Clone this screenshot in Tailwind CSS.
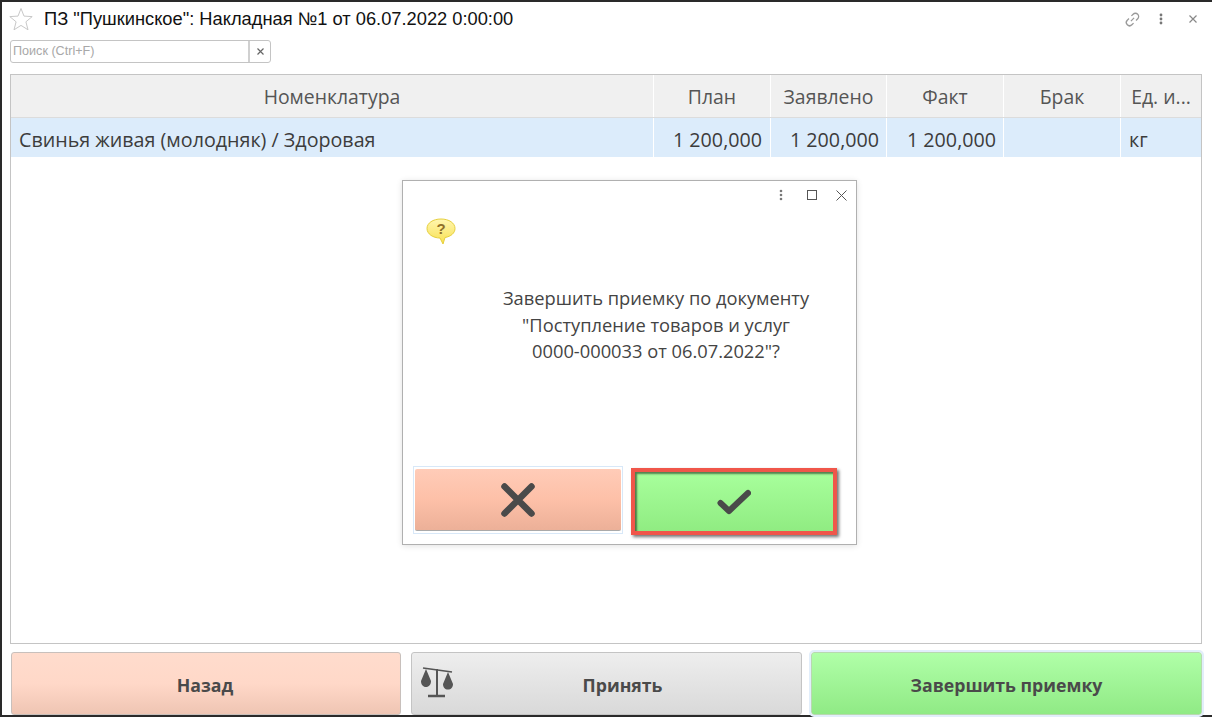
<!DOCTYPE html>
<html lang="ru"><head><meta charset="utf-8"><script src="https://cdn.jsdelivr.net/npm/@tailwindcss/browser@4"></script></head>
<body class="m-0 bg-white overflow-hidden">
<div class="relative w-[1212px] h-[719px] bg-white font-['Liberation_Sans',sans-serif] overflow-hidden">
 <div class="w-[1212px] h-[717px] border-t-2 border-l-2 border-b-2 border-[#2a2a2a] pl-[8px] pr-[10px] flex flex-col">
  <div class="h-[36px] pb-[2px] flex items-center shrink-0">
   <svg class="w-[24px] h-[24px] -ml-[1px]" viewBox="0 0 24 24"><path d="M12 1.500l3 7.600 8.200.5-6.300 5.200 2.100 8-7-4.400-7 4.400 2.100-8L.8 9.600 9 9.100z" fill="#fff" stroke="#c8c8c8" stroke-width="1"/></svg>
   <span class="ml-[11px] text-[18.3px] text-[#111] leading-none whitespace-nowrap">ПЗ "Пушкинское": Накладная №1 от 06.07.2022 0:00:00</span>
   <div class="ml-auto flex items-center mr-[5px] gap-[18px]">
    <svg class="w-[17px] h-[17px]" viewBox="0 0 16 16" fill="none" stroke="#999" stroke-width="1.200"><path d="M6.500 9.500l3-3M7 4.600l1.600-1.600a3 3 0 0 1 4.300 4.300l-1.600 1.600M9 11.400l-1.600 1.600a3 3 0 0 1-4.300-4.300l1.600-1.600"/></svg>
    <svg class="w-[4px] h-[12px]" viewBox="0 0 4 12" fill="#777"><circle cx="2" cy="2" r="1.400"/><circle cx="2" cy="6" r="1.400"/><circle cx="2" cy="10" r="1.400"/></svg>
    <svg class="w-[8px] h-[8px] ml-[8px]" viewBox="0 0 8 8" stroke="#888" stroke-width="1.200"><path d="M.5.5l7 7M7.500.5l-7 7"/></svg>
   </div>
  </div>
  <div class="mt-[2px] w-[261px] h-[23px] shrink-0 border border-[#c4c4c4] rounded-[3px] flex items-stretch">
   <div class="flex-1 border-r-2 border-[#d0d0d0] pl-[2px] text-[12.6px] leading-[20px] text-[#a8a8a8]">Поиск (Ctrl+F)</div>
   <div class="w-[20px] flex items-center justify-center"><svg class="w-[7px] h-[7px]" viewBox="0 0 7 7" stroke="#666" stroke-width="1.200"><path d="M.5.5l6 6M6.500.5l-6 6"/></svg></div>
  </div>
  <div class="mt-[11px] w-[1192px] h-[570px] shrink-0 border border-[#c4c4c4] font-['Open_Sans',sans-serif] text-[#555]">
   <div class="flex h-[43px] bg-[#f0f0f0] border-b border-[#dcdcdc] text-[19.4px] items-center text-center">
    <div class="w-[643px] h-full border-r border-white leading-[43px]">Номенклатура</div>
    <div class="w-[117px] h-full border-r border-white leading-[43px]">План</div>
    <div class="w-[116px] h-full border-r border-white leading-[43px]">Заявлено</div>
    <div class="w-[117px] h-full border-r border-white leading-[43px]">Факт</div>
    <div class="w-[117px] h-full border-r border-white leading-[43px]">Брак</div>
    <div class="flex-1 h-full leading-[43px]">Ед. и...</div>
   </div>
   <div class="flex h-[39px] bg-[#dcecfb] text-[19.7px] text-[#3c3c3c] leading-[43px]">
    <div class="w-[643px] border-r border-white pl-[8px]">Свинья живая (молодняк) / Здоровая</div>
    <div class="w-[117px] border-r border-white text-right pr-[8px]">1 200,000</div>
    <div class="w-[116px] border-r border-white text-right pr-[7px]">1 200,000</div>
    <div class="w-[117px] border-r border-white text-right pr-[7px]">1 200,000</div>
    <div class="w-[117px] border-r border-white"></div>
    <div class="flex-1 pl-[8px]">кг</div>
   </div>
  </div>
  <div class="mt-[8px] h-[63px] flex gap-[9px] font-['Open_Sans',sans-serif] font-bold text-[#4a4a4a] text-[17.7px] pl-[1px] shrink-0 w-[1192px]">
   <div class="w-[390px] h-[63px] pt-[3px] pr-[2px] rounded-[3px] border border-[#c8c0bc] bg-gradient-to-b from-[#ffdccd] via-[#ffd8c8] to-[#efc5b3] flex items-center justify-center">Назад</div>
   <div class="relative ml-[1px] w-[391px] h-[63px] pt-[3px] pl-[32px] rounded-[3px] border border-[#c4c4c4] bg-gradient-to-b from-[#eeeeee] to-[#d9d9d9] flex items-center justify-center">Принять
    <svg class="absolute left-[8px] top-[13px] w-[34px] h-[32px]" viewBox="0 0 34 32" fill="#555"><path d="M3 2l29 4" stroke="#555" stroke-width="1.500"/><path d="M17 3v26" stroke="#555" stroke-width="2"/><path d="M8 30h17" stroke="#555" stroke-width="2.500"/><path d="M6 3L1 15c0 3.500 2 6 5 6s5-2.500 5-6zM28 6l-5 12c0 3.500 2 5.500 5 5.500s5-2 5-5.500z"/></svg>
   </div>
   <div class="w-[391px] h-[63px] pt-[3px] rounded-[3px] border border-[#b8d8b0] bg-gradient-to-b from-[#b0ffa8] to-[#90ea85] flex items-center justify-center outline-2 outline-[#e2eefb]">Завершить приемку</div>
  </div>
 </div>

 <div class="absolute left-[402px] top-[180px] w-[455px] h-[365px] bg-white border border-[#b0b0b0] shadow-[0_1px_6px_rgba(0,0,0,0.12)] flex flex-col font-['Open_Sans',sans-serif]">
  <div class="h-[28px] flex items-center justify-end pr-[9px] shrink-0">
   <svg class="w-[4px] h-[12px]" viewBox="0 0 4 12" fill="#777"><circle cx="2" cy="2" r="1.300"/><circle cx="2" cy="6" r="1.300"/><circle cx="2" cy="10" r="1.300"/></svg>
   <svg class="w-[10px] h-[10px] ml-[24px]" viewBox="0 0 10 10" fill="none" stroke="#555"><rect x=".5" y=".5" width="9" height="9"/></svg>
   <svg class="w-[11px] h-[11px] ml-[19px]" viewBox="0 0 11 11" stroke="#555" stroke-width="1"><path d="M.5.5l10 10M10.500.5l-10 10"/></svg>
  </div>
  <div class="pl-[23px] pt-[9px] h-[32px] shrink-0">
   <svg class="w-[30px] h-[28px]" viewBox="0 0 30 28"><defs><linearGradient id="q" x1="0" y1="0" x2="0" y2="1"><stop offset="0" stop-color="#fff6b0"/><stop offset="1" stop-color="#f8e050"/></linearGradient></defs><path d="M15 1C7 1 1 5 1 10.500S7 20 14 20l3 6 2-6.500C25 18.500 29 15 29 10.500 29 5 23 1 15 1z" fill="url(#q)" stroke="#e6cf3c" stroke-width="1"/><text x="15" y="16" text-anchor="middle" font-family="Liberation Sans" font-weight="700" font-size="15" fill="#8f6f2a">?</text></svg>
  </div>
  <div class="mt-[44px] shrink-0 text-center text-[18.3px] leading-[26.5px] text-[#444] pl-[53px]">Завершить приемку по документу<br>"Поступление товаров и услуг<br>0000-000033 от 06.07.2022"?</div>
  <div class="absolute left-[10px] top-[285px] flex gap-[8px]">
   <div class="w-[210px] h-[68px] border border-[#d8e8f8] px-[1px] py-[2px]"><div class="h-full rounded-[2px] border-b border-[#aaa] bg-gradient-to-b from-[#ffccb8] via-[#fdc0a8] to-[#ecb098] flex items-center justify-center">
    <svg class="w-[34px] h-[34px]" viewBox="0 0 34 34" stroke="#4a4a4a" stroke-width="6.500" stroke-linecap="round"><path d="M3.500 3.500l27 27M30.500 3.500l-27 27"/></svg></div></div>
   <div class="mt-[2px] w-[206px] h-[67px] border-[4px] border-[#f0564a] shadow-[2px_2px_3px_rgba(0,0,0,0.55),inset_2px_2px_2px_rgba(0,0,0,0.5)] bg-gradient-to-b from-[#a8ff9c] to-[#90ec82] flex items-center justify-center">
    <svg class="w-[34px] h-[26px]" viewBox="0 0 34 26" fill="none" stroke="#4a4a4a" stroke-width="6" stroke-linecap="round" stroke-linejoin="round"><path d="M3.500 14l8.500 8L31 4"/></svg></div>
  </div>
 </div>
</div>
</body></html>
